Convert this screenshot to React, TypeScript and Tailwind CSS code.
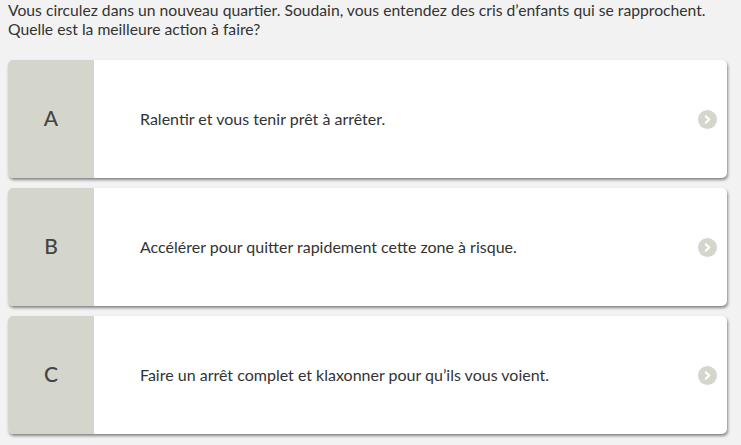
const options = [
  { letter: "A", text: "Ralentir et vous tenir prêt à arrêter." },
  { letter: "B", text: "Accélérer pour quitter rapidement cette zone à risque." },
  { letter: "C", text: "Faire un arrêt complet et klaxonner pour qu’ils vous voient." },
];

function Chevron() {
  return (
    <span className="flex h-[19px] w-[19px] items-center justify-center rounded-full bg-[#d4d6cc]">
      <svg width="9" height="9" viewBox="0 0 8 8" fill="none">
        <path d="M2.6 1.2 L5.5 4 L2.6 6.8" stroke="#fff" strokeWidth="2" strokeLinecap="round" strokeLinejoin="round" />
      </svg>
    </span>
  );
}

export default function App() {
  return (
    <div className="min-h-[445px] bg-[#f2f2f2] pl-2 pr-[14px] pt-[1px] font-['Lato',sans-serif] text-[#333]">
      <p className="text-[15.7px] leading-[19px]">
        Vous circulez dans un nouveau quartier. Soudain, vous entendez des cris d’enfants qui se rapprochent.
        <br />
        Quelle est la meilleure action à faire?
      </p>
      <div className="mt-[21px] flex flex-col gap-[10px]">
        {options.map((o) => (
          <div
            key={o.letter}
            className="flex h-[118px] overflow-hidden rounded-[5px] bg-white shadow-[1px_2px_3px_rgba(0,0,0,0.45)]"
          >
            <div className="flex w-[86px] shrink-0 items-center justify-center bg-[#d4d6cc] pb-[3px] text-[21px] font-medium text-[#444]">
              {o.letter}
            </div>
            <div className="flex flex-1 items-center pl-[46px] pr-[10px]">
              <span className="flex-1 pb-[1px] text-[16px] text-[#333]">{o.text}</span>
              <Chevron />
            </div>
          </div>
        ))}
      </div>
    </div>
  );
}
